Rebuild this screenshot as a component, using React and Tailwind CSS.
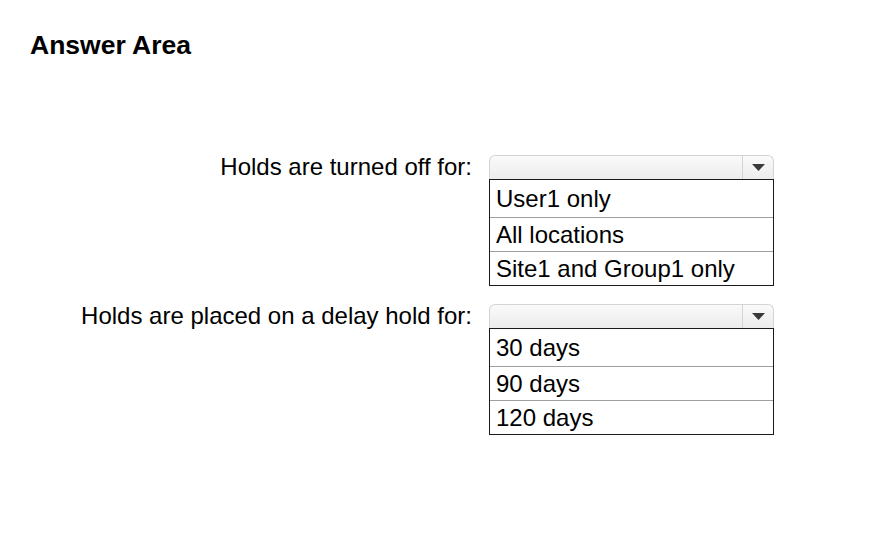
import React from 'react';

const questions = [
  { label: 'Holds are turned off for:', options: ['User1 only', 'All locations', 'Site1 and Group1 only'] },
  { label: 'Holds are placed on a delay hold for:', options: ['30 days', '90 days', '120 days'] },
];

function Dropdown({ options }) {
  return (
    <div className="w-[285px]">
      <div className="flex h-[24px] rounded-t-[6px] border border-b-0 border-[#d4d4d4] bg-gradient-to-b from-[#fafafa] to-[#ececec]">
        <div className="flex-1" />
        <div className="flex w-[31px] items-center justify-center border-l border-[#d4d4d4]">
          <svg width="13" height="7" viewBox="0 0 13 7">
            <path d="M0 0 H13 L6.5 7 Z" fill="#3a3a3a" />
          </svg>
        </div>
      </div>
      <div className="border border-[#1a1a1a] bg-white">
        {options.map((opt, i) => (
          <div
            key={opt}
            className={`flex items-center pl-[6px] text-[24px] leading-none text-black ${i === 0 ? 'h-[37px]' : 'h-[34px] border-t border-[#a0a0a0]'}`}
          >
            {opt}
          </div>
        ))}
      </div>
    </div>
  );
}

export default function App() {
  return (
    <div className="h-[545px] w-[880px] bg-white font-['Liberation_Sans',Arial,sans-serif] text-black">
      <h1 className="pl-[30px] pt-[30px] text-[26.5px] font-bold leading-[30px]">Answer Area</h1>
      <div className="mt-[95px] flex flex-col gap-[18px]">
        {questions.map(q => (
          <div key={q.label} className="flex items-start">
            <div className="w-[473px] pr-[1px] text-right text-[24px] leading-[24px]">{q.label}</div>
            <div className="ml-[16px]">
              <Dropdown options={q.options} />
            </div>
          </div>
        ))}
      </div>
    </div>
  );
}
